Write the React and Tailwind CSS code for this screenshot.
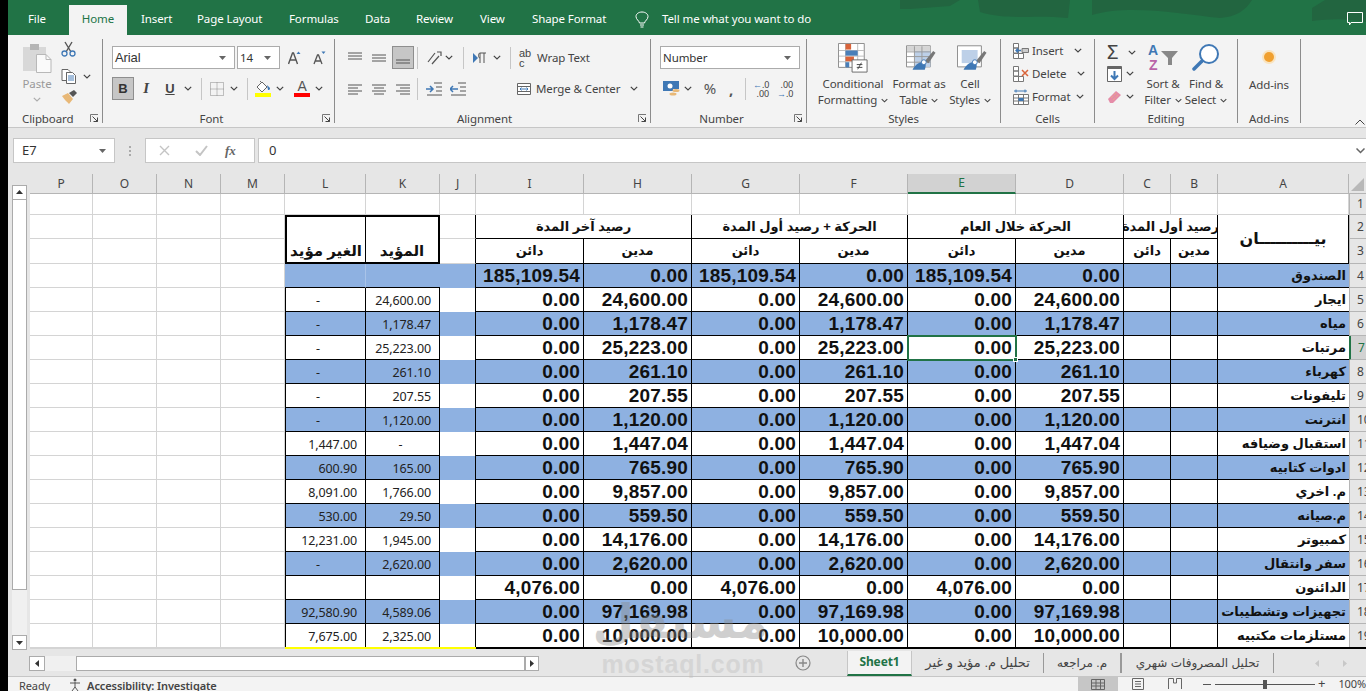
import React from "react";

const Chev = ({ className = "" }) => (
  <svg width="8" height="5" viewBox="0 0 8 5" className={"shrink-0 " + className}>
    <path d="M0.8 0.8 L4 4 L7.2 0.8" fill="none" stroke="#444" strokeWidth="1.2" />
  </svg>
);
const Caret = () => (
  <svg width="7" height="4" viewBox="0 0 7 4" className="shrink-0"><path d="M0 0H7L3.5 4Z" fill="#666" /></svg>
);
const VSep = ({ className = "" }) => <div className={"w-px h-[22px] bg-[#c6c6c6] shrink-0 " + className} />;

const Lines = ({ ys, xs, w = 14 }) => (
  <svg width={w} height="16" viewBox={`0 0 ${w} 16`} className="shrink-0">
    {ys.map((y, i) => (
      <path key={i} d={`M${xs[i][0]} ${y}H${xs[i][1]}`} stroke="#555" strokeWidth="1" />
    ))}
  </svg>
);

const Launcher = () => (
  <svg width="9" height="9" viewBox="0 0 9 9" className="absolute right-[3px] top-[2px]">
    <path d="M0.5 8V0.5H8" fill="none" stroke="#777" />
    <path d="M2.5 2.5L7.5 7.5M7.5 3.5V7.5H3.5" fill="none" stroke="#444" />
  </svg>
);

function Group({ w, label, children, labelClass = "justify-center" }) {
  return (
    <div className={"relative flex flex-col h-[84px] shrink-0 border-r border-[#8c8c8c] " + w}>
      <div className="h-[73px] shrink-0">{children}</div>
      <div className={"relative flex h-[14px] leading-[14px] text-[#444] " + labelClass}>
        {label}
      </div>
    </div>
  );
}

const Scissors = () => (
  <svg width="15" height="16" viewBox="0 0 15 16">
    <path d="M4 1L10 11M11 1L5 11" stroke="#555" strokeWidth="1.4" fill="none" />
    <circle cx="3.5" cy="12.5" r="2.5" fill="none" stroke="#3f78b5" strokeWidth="1.3" />
    <circle cx="11.5" cy="12.5" r="2.5" fill="none" stroke="#3f78b5" strokeWidth="1.3" />
  </svg>
);
const CopyIc = () => (
  <svg width="16" height="15" viewBox="0 0 16 15">
    <path d="M1 .5H7L9 2.5V3.5H5.5V11.5H1Z" fill="#fff" stroke="#666" />
    <path d="M5.5 3.5H11.5L14.5 6.5V14.5H5.5Z" fill="#fff" stroke="#666" />
    <path d="M7 7H13M7 9H13M7 11H13" stroke="#4a7fb8" />
  </svg>
);
const Brush = () => (
  <svg width="17" height="16" viewBox="0 0 17 16">
    <path d="M1 7L7 4L12 10L8 15C6 13 3 10 1 7Z" fill="#e8b877" />
    <path d="M8 4L13 1L16 4L12 8Z" fill="#555" />
  </svg>
);
const PasteIc = () => (
  <svg width="30" height="30" viewBox="0 0 30 30">
    <path d="M1 4H24V28H1Z" fill="#d8d8d8" />
    <path d="M8 1H17V7H8Z" fill="#b5b5b5" />
    <path d="M14.5 11.5H24L29 16.5V29.5H14.5Z" fill="#fafafa" stroke="#b8b8b8" />
    <path d="M24 11.5V16.5H29" fill="none" stroke="#b8b8b8" />
  </svg>
);
const BorderIc = () => (
  <svg width="14" height="14" viewBox="0 0 14 14">
    <path d="M.5 .5H13.5V13.5H.5ZM7 .5V13.5M.5 7H13.5" fill="none" stroke="#888" strokeDasharray="1 1" />
  </svg>
);
const FillIc = () => (
  <div className="flex flex-col items-center w-4">
    <svg width="16" height="13" viewBox="0 0 16 13">
      <path d="M2 7L7 2L12 7L7 12Z" fill="#fff" stroke="#666" />
      <path d="M5 1L7 3" stroke="#666" />
      <path d="M12 5L15 8C15 10 14 10 13 10Z" fill="#3f78b5" />
    </svg>
    <div className="w-4 h-1 bg-[#ffff00]" />
  </div>
);
const ColorA = () => (
  <div className="flex flex-col items-center w-4">
    <span className="text-[14px] leading-[13px] h-[13px] text-[#555] font-['Liberation_Sans',sans-serif]">A</span>
    <div className="w-4 h-1 bg-[#ff0000]" />
  </div>
);
const CFIc = () => (
  <svg width="30" height="30" viewBox="0 0 32 32">
    <path d="M.5 .5H28V26H.5Z" fill="#fff" stroke="#888" />
    <path d="M1 8H28M1 14H28M1 20H28M8 1V26M21 1V26" stroke="#bbb" />
    <path d="M8 1H14V7H8Z" fill="#d9643a" /><path d="M8 8H21V13.5H8Z" fill="#4a7fb8" />
    <path d="M8 14.5H17V19.5H8Z" fill="#d9643a" /><path d="M8 20.5H12V26H8Z" fill="#4a7fb8" />
    <path d="M15 18H31V31H15Z" fill="#fff" stroke="#666" />
    <path d="M20 23H26M20 26H26M25 21L21 28" stroke="#444" fill="none" />
  </svg>
);
const TableIc = ({ light }) => (
  <svg width="30" height="29" viewBox="0 0 32 30" className="ml-[3px]">
    <path d="M.5 2.5H26V25H.5Z" fill="#fff" stroke="#888" />
    {light ? (
      <path d="M5 7H22V21H5Z" fill="#bdd0e8" />
    ) : (
      <>
        <path d="M1 3H26V8H1Z" fill="#d5d5d5" />
        <path d="M9 8H26V25H9Z" fill="#bdd0e8" />
        <path d="M1 9H26M1 14H26M1 20H26M9 3V25M17 3V25" stroke="#999" />
      </>
    )}
    <path d="M20 19L29 8L31.5 10L24 21Z" fill="#777" />
    <path d="M7 28C9 24 14 19 19 20C22 21 21 25 20 28Z" fill="#3f78b5" />
    <circle cx="19" cy="20" r="2.6" fill="#fff" stroke="#3f78b5" />
  </svg>
);
const Grid3 = ({ variant }) => (
  <svg width="16" height="16" viewBox="0 0 16 16">
    {variant === "format" ? (
      <>
        <path d="M1 2H14M3 .5V3.5M12 .5V3.5" stroke="#3f78b5" />
        <path d="M.5 5.5H15.5V15.5H.5ZM.5 9H15.5M.5 12H15.5M5.5 5.5V15.5M10.5 5.5V15.5" fill="#fff" stroke="#777" />
        <path d="M5.5 9H10.5V12H5.5Z" fill="#3f78b5" />
      </>
    ) : (
      <>
        <path d="M.5 .5H5.5V5H.5ZM.5 5H5.5V10H.5ZM.5 10.5H5.5V15.5H.5ZM5.5 10.5H10.5V15.5H5.5Z" fill="#fff" stroke="#777" />
        {variant === "insert" ? (
          <>
            <path d="M9 5.5H15.5V9.5H9Z" fill="#ccc" stroke="#777" />
            <path d="M8 7.5H3M5 5.5L3 7.5L5 9.5" stroke="#3f78b5" fill="none" strokeWidth="1.3" />
          </>
        ) : (
          <path d="M9 4L15 10M15 4L9 10" stroke="#d9643a" strokeWidth="1.5" />
        )}
      </>
    )}
  </svg>
);
const BigBtn = ({ icon, l1, l2, w }) => (
  <div className={"flex flex-col items-center shrink-0 pt-1 " + w}>
    <div className="h-[33px] shrink-0">{icon}</div>
    <div className="leading-4 text-[#444] whitespace-nowrap">{l1}</div>
    <div className="leading-4 text-[#444] whitespace-nowrap flex items-center gap-1">{l2}<Chev className="w-[7px]" /></div>
  </div>
);
const CellRow = ({ variant, label, cls }) => (
  <div className="flex items-center h-[23px]">
    <Grid3 variant={variant} />
    <span className="ml-[3px] text-[#444]">{label}</span>
    <Chev className={cls} />
  </div>
);

const TABS = [["Insert", "w-[29px] ml-[14px]"], ["Page Layout", "w-[65px] ml-[27px]"], ["Formulas", "w-[49px] ml-[27px]"], ["Data", "w-[24px] ml-[27px]"], ["Review", "w-[37px] ml-[27px]"], ["View", "w-[25px] ml-[27px]"], ["Shape Format", "w-[73px] ml-[27px]"]];

function TitleBar() {
  return (
    <div className="relative flex items-start h-[35px] bg-[#217346] text-white overflow-hidden shrink-0">
      <svg width="466" height="35" viewBox="0 0 466 35" className="absolute right-0 top-0">
        <path d="M0 0H60L50 6L10 9L0 9Z" fill="#226540" />
        <path d="M78 0H170L168 18C130 14 110 21 80 12Z" fill="#226540" />
        <path d="M192 0H352C346 10 336 17 320 18C280 14 230 4 192 15Z" fill="#226540" />
        <path d="M412 8L425 0H466V22C445 18 430 19 412 21Z" fill="#226540" />
      </svg>
      <div className="relative flex items-center h-[35px] pt-[3px]">
        <span className="ml-5 w-[41px] shrink-0 whitespace-nowrap">File</span>
        <div className="flex items-center justify-center w-[58px] h-[30px] mt-[2px] pb-[2px] bg-[#f3f3f3] text-[#217346]">Home</div>
        {TABS.map(([t, c]) => (
          <span key={t} className={"shrink-0 whitespace-nowrap " + c}>{t}</span>
        ))}
        <svg width="14" height="17" viewBox="0 0 14 17" className="ml-[30px] shrink-0">
          <path d="M4.5 12C4 9.5 1 8.5 1 5.5C1 3 3.5 1 7 1C10.5 1 13 3 13 5.5C13 8.5 10 9.5 9.5 12ZM5 14H9M5.5 16H8.5" fill="none" stroke="#fff" />
        </svg>
        <span className="ml-[13px] whitespace-nowrap">Tell me what you want to do</span>
      </div>
      <div className="relative ml-auto mr-[3px] mt-3">
        <svg width="16" height="15" viewBox="0 0 16 15"><path d="M.5 .5H15.5V10.5H4L2.5 13V10.5H.5Z" fill="none" stroke="#fff" /></svg>
      </div>
    </div>
  );
}

function Ribbon() {
  return (
    <div className="flex items-start h-[93px] pt-1 bg-[#f3f3f3] border-b border-[#c6c6c6] shrink-0">
      <Group w="w-[95px]" label={<><span>Clipboard</span><Launcher /></>} labelClass="pl-[14px]">
        <div className="flex pl-[14px]">
          <div className="flex flex-col items-center w-[30px] pt-1">
            <PasteIc />
            <span className="mt-[3px] leading-4 text-[#999]">Paste</span>
            <Chev className="mt-[5px] opacity-40" />
          </div>
          <div className="flex flex-col ml-[9px] pt-[2px]">
            <div className="h-[24px]"><Scissors /></div>
            <div className="h-[22px] flex items-center"><CopyIc /><Chev className="ml-[6px]" /></div>
            <div className="h-[20px] pt-[2px]"><Brush /></div>
          </div>
        </div>
      </Group>

      <Group w="w-[232px]" label={<><span className="pr-[14px]">Font</span><Launcher /></>}>
        <div className="pl-[9px] pt-[7px] flex flex-col gap-2">
          <div className="flex items-center h-[23px]">
            <div className="flex items-center justify-between w-[123px] h-[23px] px-[2px] pr-2 bg-white border border-[#ababab] text-[#333] font-['Liberation_Sans',sans-serif] text-[13px]">Arial<Caret /></div>
            <div className="flex items-center justify-between ml-[2px] w-[43px] h-[23px] px-[2px] pr-2 bg-white border border-[#ababab] text-[#333]">14<Caret /></div>
            <svg width="13" height="14" viewBox="0 0 13 14" className="ml-2"><path d="M.5 13L4.5 2H5.5L9.5 13M2 9H8" fill="none" stroke="#555" strokeWidth="1.4" /><path d="M8.5 3L10.5 .5L12.5 3Z" fill="#3f78b5" /></svg>
            <svg width="13" height="14" viewBox="0 0 13 14" className="ml-3"><path d="M1 13L4.5 4H5.5L9 13M2.2 10H7.8" fill="none" stroke="#555" strokeWidth="1.3" /><path d="M8.5 .5H12.5L10.5 3Z" fill="#3f78b5" /></svg>
          </div>
          <div className="flex items-center h-[23px] text-[#444]">
            <div className="flex items-center justify-center w-[22px] h-[23px] bg-[#c6c6c6] border border-[#8e8e8e] font-bold text-[#333] font-['Liberation_Sans',sans-serif] text-[13px]">B</div>
            <div className="w-[24px] text-center italic font-['Liberation_Serif',serif] text-[15px] font-bold">I</div>
            <div className="w-[24px] text-center underline font-bold font-['Liberation_Sans',sans-serif] text-[13px]">U</div>
            <Chev className="ml-[2px]" />
            <VSep className="ml-[9px]" />
            <div className="ml-[8px]"><BorderIc /></div>
            <Chev className="ml-[6px]" />
            <VSep className="ml-[9px]" />
            <div className="ml-[7px]"><FillIc /></div>
            <Chev className="ml-[5px]" />
            <div className="ml-[10px]"><ColorA /></div>
            <Chev className="ml-[5px]" />
          </div>
        </div>
      </Group>

      <Group w="w-[316px]" label={<><span className="pr-[16px]">Alignment</span><Launcher /></>}>
        <div className="pl-[13px] pt-[7px] flex flex-col gap-2">
          <div className="flex items-center h-[23px]">
            <Lines ys={[3, 6, 9]} xs={[[0, 14], [0, 14], [0, 14]]} />
            <div className="ml-[10px]"><Lines ys={[5, 8, 11]} xs={[[0, 14], [0, 14], [0, 14]]} /></div>
            <div className="flex items-center justify-center ml-[6px] w-[22px] h-[23px] bg-[#c6c6c6] border border-[#8e8e8e]"><Lines ys={[10, 13]} xs={[[0, 14], [0, 14]]} /></div>
            <VSep className="ml-[3px]" />
            <svg width="16" height="16" viewBox="0 0 16 16" className="ml-2"><path d="M2 12L9 3M6 14L13 6M11 2L15 2L15 6" fill="none" stroke="#555" strokeWidth="1.2" /></svg>
            <Chev className="ml-[3px]" />
            <VSep className="ml-[10px]" />
            <svg width="14" height="12" viewBox="0 0 14 12" className="ml-[9px]"><path d="M0 1L5 6L0 11Z" fill="#3f78b5" /><path d="M7 11V1H13M11 1V11M7 1C5 1 5 6 7 6" fill="none" stroke="#555" /></svg>
            <Chev className="ml-[6px]" />
            <VSep className="ml-[9px]" />
            <span className="ml-2 w-[14px] text-[11px] leading-[10px] text-[#444] font-['Liberation_Sans',sans-serif]">ab<br />c</span>
            <span className="ml-[4px] text-[#444] whitespace-nowrap">Wrap Text</span>
          </div>
          <div className="flex items-center h-[23px]">
            <Lines ys={[4, 7, 10, 13]} xs={[[0, 14], [0, 10], [0, 14], [0, 10]]} />
            <div className="ml-[10px]"><Lines ys={[4, 7, 10, 13]} xs={[[0, 14], [2, 12], [0, 14], [2, 12]]} /></div>
            <div className="ml-[10px]"><Lines ys={[4, 7, 10, 13]} xs={[[0, 14], [4, 14], [0, 14], [4, 14]]} /></div>
            <VSep className="ml-[7px]" />
            <svg width="16" height="14" viewBox="0 0 16 14" className="ml-2"><path d="M8 1H16M10 5H16M10 9H16M1 13H16" stroke="#555" /><path d="M0 7H6M4 4L7 7L4 10" fill="none" stroke="#3f78b5" strokeWidth="1.5" /></svg>
            <svg width="16" height="14" viewBox="0 0 16 14" className="ml-2"><path d="M8 1H16M10 5H16M10 9H16M1 13H16" stroke="#555" /><path d="M8 7H1M3 4L0 7L3 10" fill="none" stroke="#3f78b5" strokeWidth="1.5" /></svg>
            <svg width="14" height="14" viewBox="0 0 14 14" className="ml-[51px]"><path d="M.5 1.5H13.5V12.5H.5ZM.5 4.5H13.5M.5 9.5H13.5" fill="#fff" stroke="#666" /><path d="M3 7H11M4.5 5.5L3 7L4.5 8.5M9.5 5.5L11 7L9.5 8.5" fill="none" stroke="#3f78b5" /></svg>
            <span className="ml-[5px] w-[86px] text-[#444] whitespace-nowrap">Merge &amp; Center</span>
            <Chev className="ml-2" />
          </div>
        </div>
      </Group>

      <Group w="w-[156px]" label={<><span className="pr-[14px]">Number</span><Launcher /></>}>
        <div className="pl-[9px] pt-[7px] flex flex-col gap-2">
          <div className="flex items-center justify-between w-[140px] h-[23px] px-[2px] pr-2 bg-white border border-[#ababab] text-[#333]">Number<Caret /></div>
          <div className="flex items-center h-[23px]">
            <svg width="17" height="16" viewBox="0 0 17 16" className="ml-[3px]"><path d="M0 0H16V8H10V10H0Z" fill="#3f78b5" /><circle cx="7" cy="5" r="2.5" fill="#fff" /><ellipse cx="13" cy="9.5" rx="3.5" ry="1.5" fill="#e8b877" /><ellipse cx="10" cy="13" rx="3.5" ry="1.5" fill="#e8b877" /></svg>
            <Chev className="ml-1" />
            <span className="ml-[10px] w-4 text-[15px] text-[#555] text-center">%</span>
            <span className="ml-[11px] w-[6px] text-[15px] font-bold text-[#555] leading-[12px]">,</span>
            <VSep className="ml-[10px]" />
            <div className="ml-[7px] w-[16px] flex flex-col leading-[9px] text-[9px] text-[#444] text-right whitespace-nowrap"><span><span className="text-[#3f78b5]">←</span>.0</span><span>.00</span></div>
            <div className="ml-[8px] w-[16px] flex flex-col leading-[9px] text-[9px] text-[#444] text-right whitespace-nowrap"><span>.00</span><span><span className="text-[#3f78b5]">→</span>.0</span></div>
          </div>
        </div>
      </Group>

      <Group w="w-[194px]" label="Styles">
        <div className="flex pl-[11px]">
          <BigBtn w="w-[70px]" icon={<CFIc />} l1="Conditional" l2="Formatting" />
          <BigBtn w="w-[62px]" icon={<TableIc />} l1="Format as" l2="Table" />
          <BigBtn w="w-[40px]" icon={<TableIc light />} l1="Cell" l2="Styles" />
        </div>
      </Group>

      <Group w="w-[94px]" label="Cells">
        <div className="pl-3">
          <CellRow variant="insert" label="Insert" cls="ml-[11px]" />
          <CellRow variant="delete" label="Delete" cls="ml-[11px]" />
          <CellRow variant="format" label="Format" cls="ml-[6px]" />
        </div>
      </Group>

      <Group w="w-[143px]" label="Editing">
        <div className="flex pl-3">
          <div className="w-[35px] shrink-0">
            <div className="flex items-center h-[23px] pt-[3px]"><span className="w-[16px] text-[20px] leading-none text-[#444]">Σ</span><Chev className="ml-[5px]" /></div>
            <div className="flex items-center h-[23px]">
              <svg width="15" height="16" viewBox="0 0 15 16"><path d="M.5 .5H14.5V15.5H.5Z" fill="#fff" stroke="#666" /><path d="M.5 .5H14.5V3H.5Z" fill="#666" /><path d="M7.5 5V13M4 9.5L7.5 13L11 9.5" fill="none" stroke="#3f78b5" strokeWidth="2" /></svg>
              <Chev className="ml-[4px]" />
            </div>
            <div className="flex items-center h-[23px]">
              <svg width="15" height="14" viewBox="0 0 15 14"><path d="M1 9L9 1L14 5L6 13H3Z" fill="#e58ca8" /><path d="M4 8L9 3M6 10L11 5" stroke="#e8b877" strokeDasharray="1 1" /></svg>
              <Chev className="ml-[4px]" />
            </div>
          </div>
          <BigBtn w="w-[42px]" icon={
            <svg width="30" height="28" viewBox="0 0 30 28">
              <text x="0" y="12" fontSize="14" fontWeight="bold" fill="#3f78b5" fontFamily="Liberation Sans">A</text>
              <text x="1" y="27" fontSize="14" fontWeight="bold" fill="#b864a8" fontFamily="Liberation Sans">Z</text>
              <path d="M13 8H30L24 15V22H20V15Z" fill="#888" />
            </svg>} l1="Sort &" l2="Filter" />
          <BigBtn w="w-[44px]" icon={
            <svg width="28" height="28" viewBox="0 0 28 28"><circle cx="17" cy="11" r="9" fill="#fff" stroke="#3f78b5" strokeWidth="2" /><path d="M10 18L2 26" stroke="#3f78b5" strokeWidth="3.5" strokeLinecap="round" /></svg>} l1="Find &" l2="Select" />
        </div>
      </Group>

      <Group w="w-[63px]" label="Add-ins">
        <div className="flex flex-col items-center pt-[10px]">
          <div className="h-[27px] pt-[3px]"><div className="w-[10px] h-[10px] rounded-full bg-[#f0a030] ring-2 ring-[#f9e4c0]" /></div>
          <span className="text-[#444]">Add-ins</span>
        </div>
      </Group>
      <div className="flex flex-1 justify-end items-end h-[86px] pr-[1px]">
        <svg width="10" height="6" viewBox="0 0 10 6"><path d="M.5 5.5L5 1L9.5 5.5" fill="none" stroke="#444" /></svg>
      </div>
    </div>
  );
}

function FormulaBar() {
  return (
    <div className="flex items-start h-[37px] pt-[10px] pl-[5px] bg-[#e6e6e6] text-[13px] text-[#333] shrink-0">
      <div className="flex items-center justify-between w-[102px] h-[25px] pl-2 pr-2 bg-white border border-[#c6c6c6]">E7<Caret /></div>
      <div className="flex flex-col justify-center gap-[2px] w-[30px] h-[25px] items-center">
        <i className="w-[2px] h-[2px] bg-[#aaa]" /><i className="w-[2px] h-[2px] bg-[#aaa]" /><i className="w-[2px] h-[2px] bg-[#aaa]" />
      </div>
      <div className="flex items-center w-[110px] h-[25px] bg-white border border-[#c6c6c6] pl-[13px]">
        <svg width="11" height="11" viewBox="0 0 11 11"><path d="M1 1L10 10M10 1L1 10" stroke="#c4c4c4" strokeWidth="1.4" /></svg>
        <svg width="13" height="11" viewBox="0 0 13 11" className="ml-[25px]"><path d="M1 6L5 10L12 1" fill="none" stroke="#c4c4c4" strokeWidth="2" /></svg>
        <span className="ml-[17px] italic font-bold text-[#666] font-['Liberation_Serif',serif] text-[13px]">fx</span>
      </div>
      <div className="flex flex-1 items-center justify-between ml-[3px] h-[25px] bg-white border-y border-l border-[#c6c6c6] pl-[10px] pr-[1px]">
        <span>0</span>
        <svg width="9" height="6" viewBox="0 0 9 6"><path d="M.5 .5L4.5 4.5L8.5 .5" fill="none" stroke="#666" strokeWidth="1.5" /></svg>
      </div>
    </div>
  );
}

const COLS = ["P", "O", "N", "M", "L", "K", "J", "I", "H", "G", "F", "E", "D", "C", "B", "A"];

const ROWS = [
  ["الصندوق", "", "", "0.00", "185,109.54", true],
  ["ايجار", "24,600.00", "-", "24,600.00", "0.00", false],
  ["مياه", "1,178.47", "-", "1,178.47", "0.00", true],
  ["مرتبات", "25,223.00", "-", "25,223.00", "0.00", false],
  ["كهرباء", "261.10", "-", "261.10", "0.00", true],
  ["تليفونات", "207.55", "-", "207.55", "0.00", false],
  ["انترنت", "1,120.00", "-", "1,120.00", "0.00", true],
  ["استقبال وضيافه", "-", "1,447.00", "1,447.04", "0.00", false],
  ["ادوات كتابيه", "165.00", "600.90", "765.90", "0.00", true],
  ["م. اخري", "1,766.00", "8,091.00", "9,857.00", "0.00", false],
  ["م.صيانه", "29.50", "530.00", "559.50", "0.00", true],
  ["كمبيوتر", "1,945.00", "12,231.00", "14,176.00", "0.00", false],
  ["سفر وانتقال", "2,620.00", "-", "2,620.00", "0.00", true],
  ["الدائنون", "", "", "0.00", "4,076.00", false],
  ["تجهيزات وتشطيبات", "4,589.06", "92,580.90", "97,169.98", "0.00", true],
  ["مستلزمات مكتبيه", "2,325.00", "7,675.00", "10,000.00", "0.00", false],
];

const Blank = ({ h, n = 4 }) =>
  Array.from({ length: n }, (_, i) => <div key={i} className={"border-r border-b border-[#d4d4d4] " + h} />);

const RowHead = ({ n, active }) => (
  <div className={"flex items-center overflow-hidden whitespace-nowrap pl-[7px] text-[12px] border-b border-[#b5b5b5] " + (active ? "bg-[#d2d2d2] text-[#217346] border-l-2 border-l-[#217346]" : "bg-[#e6e6e6] text-[#444] border-l border-l-[#b5b5b5]")}>{n}</div>
);

const Num = ({ v, blue, active }) => (
  <div className={"relative flex items-center justify-end pr-[3px] pt-[2px] border-r border-b border-black font-bold text-[19px] tracking-[0.2px] text-[#111] font-['Liberation_Sans',sans-serif] " + (blue ? "bg-[#8eb1e1]" : "bg-white") + (active ? " z-10 outline-2 -outline-offset-1 outline-[#217346]" : "")}>
    {v}
    {active && <i className="absolute -right-[3px] -bottom-[3px] w-[5px] h-[5px] bg-[#217346] border border-white" />}
  </div>
);

const Small = ({ v, blue, left }) => (
  <div className={"flex items-end text-[12.5px] text-[#222] font-['Noto_Sans',sans-serif] border-r border-b border-black " + (v === "-" ? (left ? "justify-center pr-[15px] " : "justify-center pr-[4px] ") : "justify-end pr-[8px] ") + (left ? "border-l " : "") + (blue ? "bg-[#8eb1e1]" : "bg-white")}>{v}</div>
);

const ArHead = ({ t, cls }) => (
  <div dir="rtl" className={"flex items-center justify-center overflow-hidden whitespace-nowrap font-bold text-[13px] text-[#111] bg-white border-r border-b border-black font-['Liberation_Sans','DejaVu_Sans',sans-serif] " + cls}>{t}</div>
);

function Sheet() {
  return (
    <div className="flex-1 min-w-0 flex flex-col">
      <div className="grid grid-cols-[63px_64px_64px_64px_81px_74px_36px_108px_108px_108px_108px_108px_108px_47px_47px_131px_17px] grid-rows-[20px_21px_24px_25px_repeat(16,24px)] bg-white">
        {COLS.map((c) => (
          <div key={c} className={"flex items-center justify-center text-[12px] text-[#444] " + (c === "E" ? "bg-[#d2d2d2] border-b-2 border-[#217346] text-[#217346] border-r border-r-[#b5b5b5]" : "bg-[#e6e6e6] border-r border-b border-[#b5b5b5]")}>{c}</div>
        ))}
        <div className="flex items-end justify-center pb-[2px] bg-[#e6e6e6] border-b border-[#b5b5b5]">
          <svg width="13" height="13" viewBox="0 0 13 13"><path d="M13 0V13H0Z" fill="#b8b8b8" /></svg>
        </div>

        <Blank h="" n={16} />
        <RowHead n="1" />

        <Blank h="" />
        <div className="row-span-2 col-span-1 flex items-end justify-center bg-white border-2 border-black border-r-1 font-bold text-[15px] text-[#111] whitespace-nowrap font-['Liberation_Sans','DejaVu_Sans',sans-serif]" dir="rtl">الغير مؤيد</div>
        <div className="row-span-2 flex items-end justify-center bg-white border-2 border-black border-l-0 font-bold text-[15px] text-[#111] whitespace-nowrap font-['Liberation_Sans','DejaVu_Sans',sans-serif]" dir="rtl">المؤيد</div>
        <div className="border-r border-b border-black border-b-[#d4d4d4] border-r-black" />
        <ArHead t="رصيد آخر المدة" cls="col-span-2" />
        <ArHead t="الحركة + رصيد أول المدة" cls="col-span-2" />
        <ArHead t="الحركة خلال العام" cls="col-span-2" />
        <ArHead t="رصيد أول المدة" cls="col-span-2" />
        <ArHead t="بيــــــــــان" cls="row-span-2 text-[16px]" />
        <RowHead n="2" />

        <Blank h="" />
        <div className="border-r border-b border-black border-b-[#d4d4d4]" />
        <ArHead t="دائن" /><ArHead t="مدين" /><ArHead t="دائن" /><ArHead t="مدين" />
        <ArHead t="دائن" /><ArHead t="مدين" /><ArHead t="دائن" /><ArHead t="مدين" />
        <RowHead n="3" />

        {ROWS.map(([name, k, l, d, c, blue], i) => {
          const first = i === 0;
          const n = i + 4;
          const bg = blue ? "bg-[#8eb1e1]" : "bg-white";
          return (
            <React.Fragment key={n}>
              <Blank h="" />
              {first ? (
                <>
                  <div className={"border-r border-[#a9c3e8] border-b border-b-black " + bg} />
                  <div className={"border-b border-b-black " + bg} />
                </>
              ) : (
                <>
                  <Small v={l} blue={blue} left />
                  <Small v={k} blue={blue} />
                </>
              )}
              <div className={"border-r border-black " + bg} />
              <Num v={c} blue={blue} /><Num v={d} blue={blue} />
              <Num v={c} blue={blue} /><Num v={d} blue={blue} />
              <Num v={c} blue={blue} active={n === 7} /><Num v={d} blue={blue} />
              <div className={"border-r border-b border-black " + bg} />
              <div className={"border-r border-b border-black " + bg} />
              <div dir="rtl" className={"flex items-center pr-[3px] whitespace-nowrap overflow-hidden font-bold text-[13px] text-[#111] border-b border-black font-['Liberation_Sans','DejaVu_Sans',sans-serif] " + bg}>{name}</div>
              <RowHead n={n} active={n === 7} />
            </React.Fragment>
          );
        })}
      </div>
      <div className="flex h-[2px] -mt-px shrink-0">
        <div className="w-[255px] bg-[#d4d4d4]" />
        <div className="w-[191px] bg-[#ffff00]" />
        <div className="flex-1 bg-black" />
      </div>
    </div>
  );
}

function VScroll() {
  return (
    <div className="flex flex-col w-[22px] pl-1 pr-[3px] pt-[11px] bg-[#e6e6e6] shrink-0">
      <div className="flex items-center justify-center h-[15px] bg-white border border-[#ababab]">
        <svg width="7" height="4" viewBox="0 0 7 4"><path d="M0 4H7L3.5 0Z" fill="#333" /></svg>
      </div>
      <div className="h-[399px] bg-white border border-[#ababab] border-t-0" />
      <div className="h-[46px] bg-[#f0f0f0]" />
      <div className="flex items-center justify-center h-[15px] bg-white border border-[#ababab]">
        <svg width="7" height="4" viewBox="0 0 7 4"><path d="M0 0H7L3.5 4Z" fill="#333" /></svg>
      </div>
    </div>
  );
}

function SheetTabs() {
  return (
    <div className="flex items-center h-[27px] bg-[#e6e6e6] border-b border-[#c6c6c6] text-[12px] text-[#444] shrink-0">
      <div className="flex items-center justify-center ml-[21px] w-[16px] h-[15px] bg-white border border-[#ababab]">
        <svg width="4" height="7" viewBox="0 0 4 7"><path d="M4 0V7L0 3.5Z" fill="#333" /></svg>
      </div>
      <div className="w-[31px] h-[15px] bg-[#f0f0f0]" />
      <div className="w-[449px] h-[15px] bg-white border border-[#ababab]" />
      <div className="flex items-center justify-center w-[14px] h-[15px] bg-white border border-[#ababab]">
        <svg width="4" height="7" viewBox="0 0 4 7"><path d="M0 0V7L4 3.5Z" fill="#333" /></svg>
      </div>
      <svg width="16" height="16" viewBox="0 0 16 16" className="ml-[256px]">
        <circle cx="8" cy="8" r="7" fill="none" stroke="#888" strokeWidth="1.2" />
        <path d="M8 4V12M4 8H12" stroke="#888" strokeWidth="1.4" />
      </svg>
      <div className="flex items-center justify-center ml-[36px] w-[65px] h-[25px] bg-[#f3f3f3] border-b-2 border-x border-[#217346] border-x-[#c6c6c6] font-bold text-[#217346]">Sheet1</div>
      <div dir="rtl" className="flex items-center justify-center w-[132px] h-[20px] border-r border-[#999] whitespace-nowrap text-[13px] font-['Liberation_Sans','DejaVu_Sans',sans-serif]">تحليل م. مؤيد و غير</div>
      <div dir="rtl" className="flex items-center justify-center w-[77px] h-[20px] border-r border-[#999] whitespace-nowrap font-['Liberation_Sans','DejaVu_Sans',sans-serif]">م. مراجعه</div>
      <div dir="rtl" className="flex items-center justify-center w-[153px] h-[20px] border-x border-[#999] whitespace-nowrap font-['Liberation_Sans','DejaVu_Sans',sans-serif]">تحليل المصروفات شهري</div>
      <svg width="4" height="7" viewBox="0 0 4 7" className="ml-[41px]"><path d="M4 0V7L0 3.5Z" fill="#c8c8c8" /></svg>
      <svg width="4" height="7" viewBox="0 0 4 7" className="ml-6"><path d="M0 0V7L4 3.5Z" fill="#c8c8c8" /></svg>
    </div>
  );
}

function StatusBar() {
  return (
    <div className="flex items-center h-[14px] bg-[#f3f3f3] text-[11px] text-[#444] overflow-hidden shrink-0">
      <span className="ml-[11px] mt-[5px]">Ready</span>
      <svg width="16" height="13" viewBox="0 0 16 13" className="ml-[18px]"><circle cx="7" cy="2" r="1.5" fill="#555" /><path d="M2 5H12M7 4V9M7 9L4 13M7 9L10 13" stroke="#555" fill="none" /></svg>
      <span className="ml-[3px] mt-[5px] font-semibold">Accessibility: Investigate</span>
      <div className="flex items-center justify-center ml-auto w-[40px] h-[14px] bg-[#c6c6c6]">
        <svg width="14" height="11" viewBox="0 0 14 11"><path d="M.5 .5H13.5V10.5H.5ZM.5 4H13.5M.5 7H13.5M5 .5V10.5M9.5 .5V10.5" fill="none" stroke="#666" /></svg>
      </div>
      <svg width="12" height="12" viewBox="0 0 12 12" className="ml-[14px]"><path d="M.5 .5H11.5V11.5H.5ZM3 3.5H9M3 6H9M3 8.5H9" fill="none" stroke="#666" /></svg>
      <svg width="14" height="12" viewBox="0 0 14 12" className="ml-[24px]"><path d="M.5 11V.5H5.5V5H8.5V.5H13.5V11" fill="none" stroke="#666" /></svg>
      <span className="ml-[21px] w-2 h-px bg-[#555]" />
      <div className="flex items-center justify-center ml-1 w-[100px] h-px bg-[#555]"><i className="w-[4px] h-[9px] bg-[#555]" /></div>
      <span className="ml-[3px] text-[13px]">+</span>
      <span className="ml-[13px] whitespace-nowrap">100%</span>
    </div>
  );
}

export default function App() {
  return (
    <div className="relative flex w-[1366px] h-[691px] overflow-hidden bg-black font-['Noto_Sans',sans-serif] text-[11.5px] tracking-[-0.1px]">
      <div className="w-2 shrink-0 bg-black" />
      <div className="flex flex-col w-[1358px] shrink-0 bg-[#e6e6e6]">
        <TitleBar />
        <Ribbon />
        <FormulaBar />
        <div className="flex shrink-0 pt-[9px] h-[485px]">
          <VScroll />
          <Sheet />
        </div>
        <SheetTabs />
        <StatusBar />
      </div>
      <div className="absolute left-[598px] top-[594px] w-[170px] pointer-events-none text-center select-none text-[#8a8a8a] opacity-40">
        <div dir="rtl" className="font-bold text-[48px] leading-[54px] font-['DejaVu_Sans',sans-serif]">مستقل</div>
        <div className="mt-[3px] font-bold text-[25px] leading-[26px] tracking-[0.8px] text-[#bdbdbd] font-['Liberation_Sans',sans-serif]">mostaql.com</div>
      </div>
    </div>
  );
}
